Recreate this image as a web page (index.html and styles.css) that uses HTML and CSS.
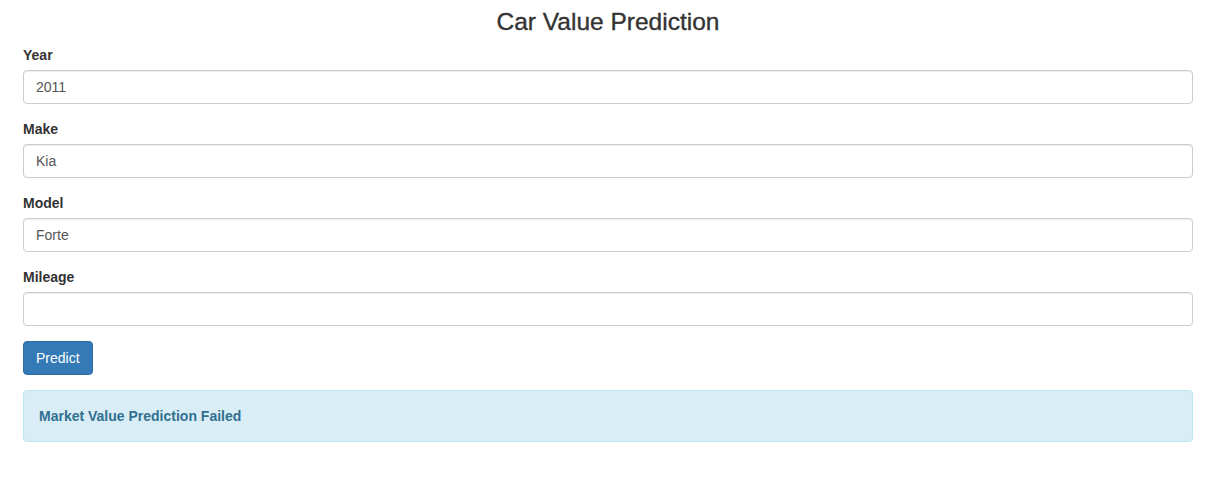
FILE: index.html
```html
<!DOCTYPE html>
<html lang="en">
<head>
<meta charset="utf-8">
<title>Car Value Prediction</title>
<link rel="stylesheet" href="styles.css">
</head>
<body>
<div class="container">
  <h3 class="title">Car Value Prediction</h3>
  <form class="form">
    <div class="form-group">
      <label class="label" for="year">Year</label>
      <input class="input" id="year" type="text" value="2011">
    </div>
    <div class="form-group">
      <label class="label" for="make">Make</label>
      <input class="input" id="make" type="text" value="Kia">
    </div>
    <div class="form-group">
      <label class="label" for="model">Model</label>
      <input class="input" id="model" type="text" value="Forte">
    </div>
    <div class="form-group">
      <label class="label" for="mileage">Mileage</label>
      <input class="input" id="mileage" type="text" value="">
    </div>
    <button class="btn" type="button">Predict</button>
  </form>
  <div class="alert"><strong>Market Value Prediction Failed</strong></div>
</div>
</body>
</html>
```
FILE: styles.css
```css
* { box-sizing: border-box; }
html, body { margin: 0; padding: 0; background: #fff; }
body {
  font-family: "Liberation Sans", Arial, Helvetica, sans-serif;
  font-size: 14px;
  line-height: 20px;
  color: #333;
}
.container {
  padding: 9px 28px 8px 23px;
}
.title {
  margin: 0 0 10px;
  font-size: 24.5px;
  line-height: 26.4px;
  font-weight: 500;
  -webkit-text-stroke: 0.35px #333;
  text-align: center;
  color: #333;
}
.form { margin: 0; }
.form-group {
  display: flex;
  flex-direction: column;
  margin-bottom: 15px;
}
.label {
  display: block;
  font-weight: bold;
  margin-bottom: 5px;
}
.input {
  display: block;
  width: 100%;
  height: 34px;
  padding: 6px 12px;
  font-family: inherit;
  font-size: 14px;
  line-height: 20px;
  color: #555;
  background: #fff;
  border: 1px solid #ccc;
  border-radius: 4px;
  box-shadow: inset 0 1px 1px rgba(0,0,0,.075);
  outline: none;
}
.btn {
  display: inline-block;
  height: 34px;
  padding: 6px 12px;
  font-family: inherit;
  font-size: 14px;
  line-height: 20px;
  color: #fff;
  background: #337ab7;
  border: 1px solid #2e6da4;
  border-radius: 4px;
  cursor: pointer;
}
.alert {
  margin-top: 15px;
  padding: 15px;
  color: #31708f;
  background: #d9edf7;
  border: 1px solid #bce8f1;
  border-radius: 4px;
}
```
